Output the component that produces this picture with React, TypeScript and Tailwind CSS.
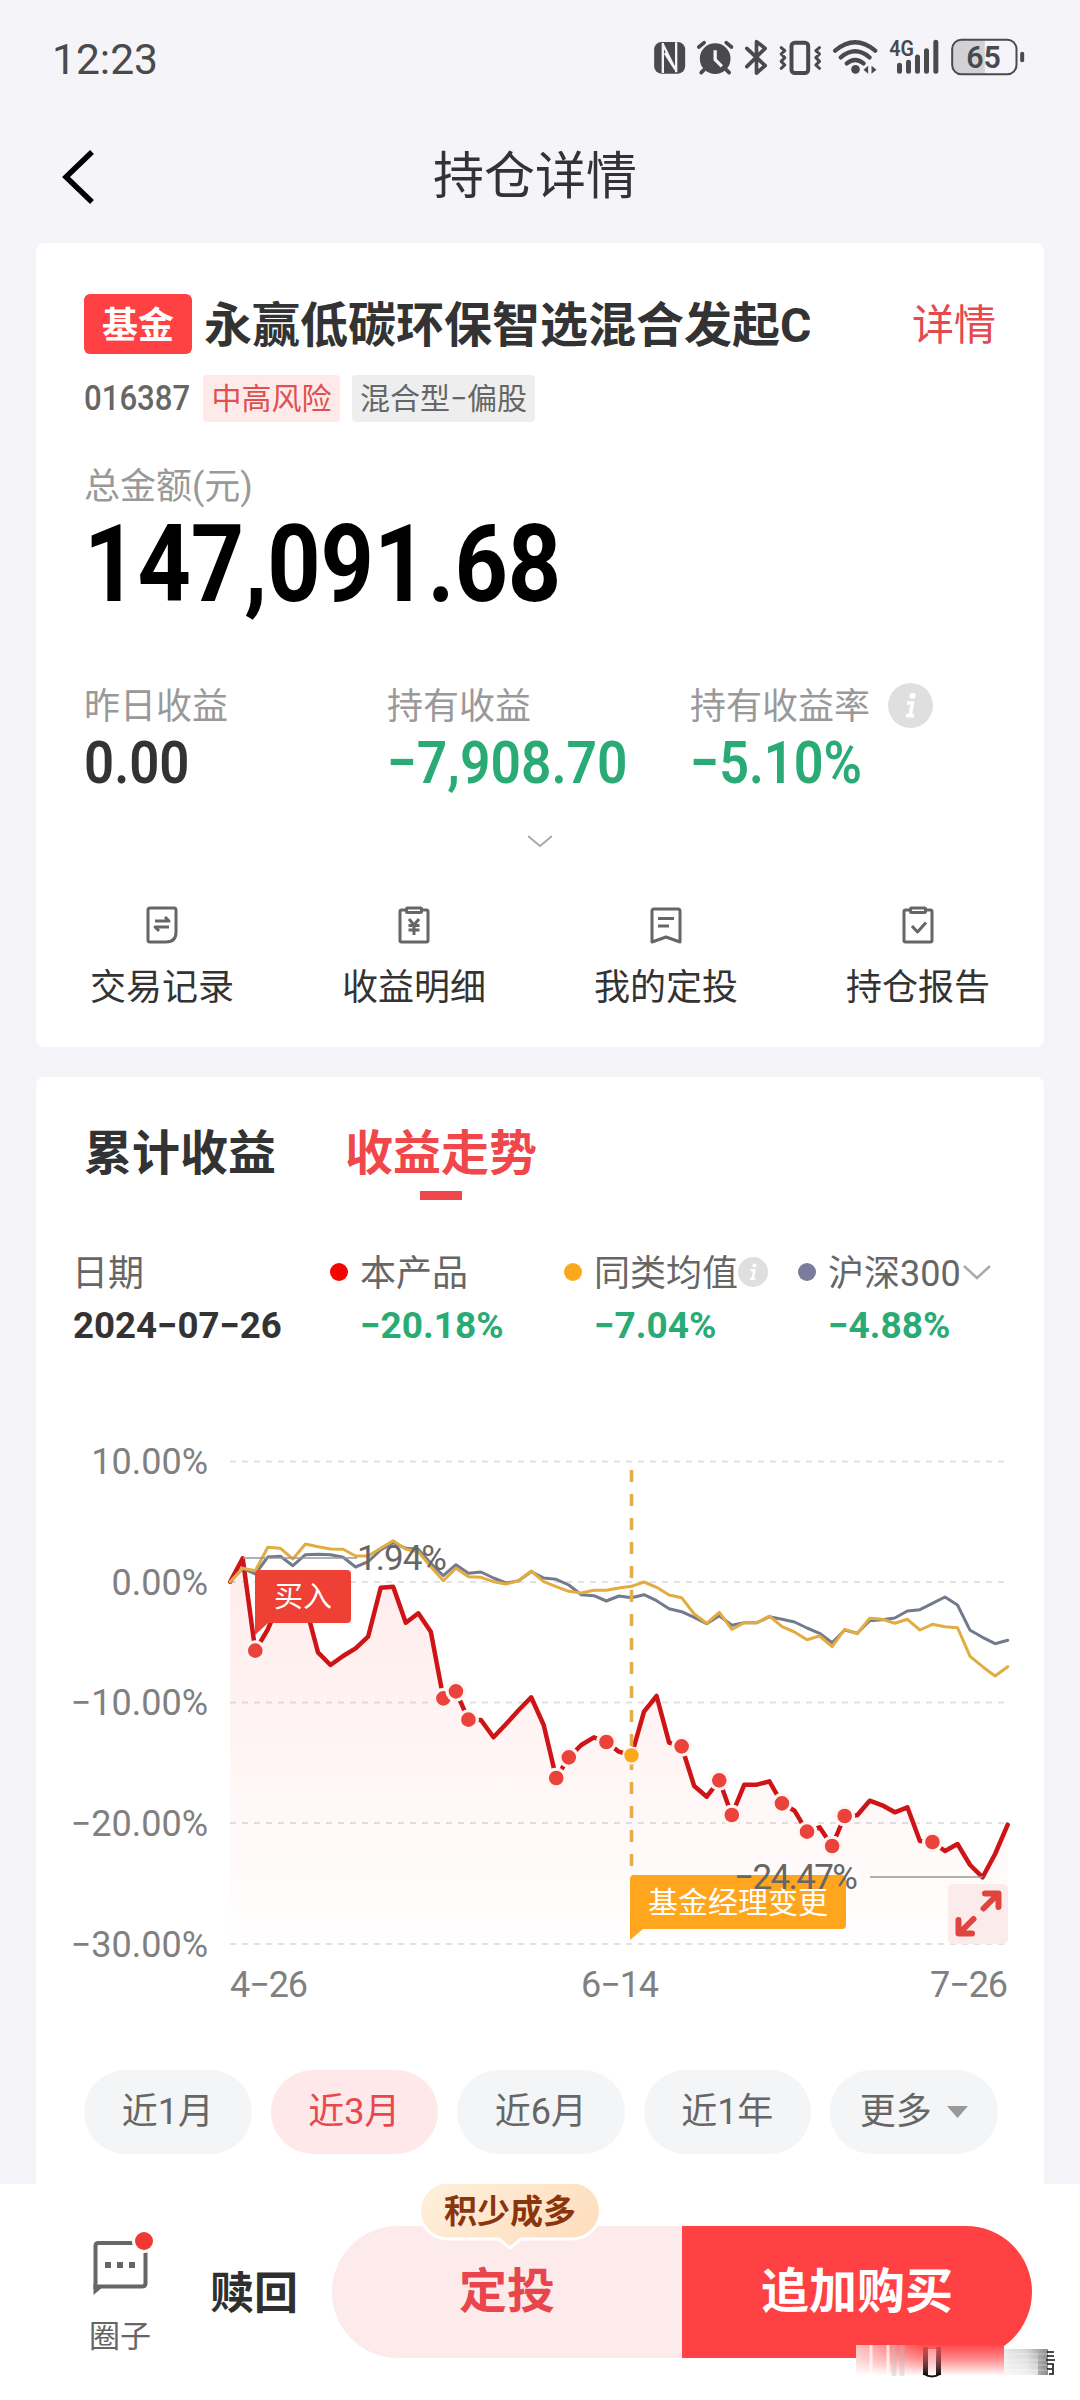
import React from "react";

const CHART_X0 = 230.2;
const CHART_STEP = 12.54;
const CHART_TOP = 1420;

// Vertical positions in thirds of a pixel below CHART_TOP, one per trading day.
const FUND = [
  485, 415, 692, 628, 540, 520, 555, 697, 735, 708, 685, 650, 503, 500, 608, 580, 635, 835, 814, 899, 900, 952, 912, 871,
  832, 915, 1074, 1012, 975, 952, 966, 995, 1006, 875, 828, 968, 979, 1098, 1130, 1081, 1185, 1094, 1094, 1084, 1150,
  1172, 1235, 1222, 1278, 1188, 1186, 1142, 1156, 1177, 1162, 1263, 1266, 1293, 1272, 1335, 1372, 1302, 1214,
];
const PEERS = [
  485, 445, 452, 382, 385, 417, 372, 380, 387, 388, 408, 408, 385, 362, 388, 395, 440, 482, 445, 470, 472, 485, 492, 482,
  453, 485, 500, 514, 519, 511, 511, 504, 499, 486, 502, 525, 533, 582, 610, 577, 628, 608, 608, 588, 620, 636, 659, 648,
  680, 628, 641, 595, 598, 610, 598, 630, 613, 620, 623, 709, 740, 768, 740,
];
const INDEX = [
  485, 445, 462, 411, 409, 437, 404, 403, 404, 412, 441, 425, 390, 368, 385, 388, 430, 467, 434, 460, 456, 474, 489, 482,
  455, 474, 478, 495, 524, 527, 543, 528, 533, 524, 542, 566, 575, 592, 611, 587, 616, 608, 608, 590, 598, 606, 624, 640,
  668, 630, 640, 602, 599, 594, 573, 569, 550, 531, 555, 631, 652, 671, 661,
];
const BUYS = [2, 17, 18, 19, 26, 27, 30, 36, 39, 40, 44, 46, 48, 49, 56];

const px = (i: number) => CHART_X0 + i * CHART_STEP;
const py = (v: number) => CHART_TOP + v / 3;
const points = (s: number[]) => s.map((v, i) => `${px(i).toFixed(1)},${py(v).toFixed(1)}`).join(" ");

const GRID = [
  { label: "10.00%", y: 1461.5 },
  { label: "0.00%", y: 1582 },
  { label: "−10.00%", y: 1702.5 },
  { label: "−20.00%", y: 1823 },
  { label: "−30.00%", y: 1944 },
];

function StatusIcons() {
  return (
    <svg className="h-10 w-[371px]" viewBox="42 50 1112 120" fill="none" stroke="#4a4a4c">
      <rect x="42" y="65" width="93" height="95" rx="22" fill="#4a4a4c" stroke="none" />
      <path d="M68 68v90M68 72l38 76M74 98l32 50M108 66v90" stroke="#f4f4f9" strokeWidth="7" />
      <circle cx="225" cy="115" r="46" fill="#4a4a4c" stroke="none" />
      <path d="M176 80l16-13M274 80l-16-13M192 148l-9 9M258 148l9 9" strokeWidth="11" strokeLinecap="round" />
      <path d="M225 90v28l20 20" stroke="#f4f4f9" strokeWidth="10" />
      <path d="M320 84l55 52-26 22V64l26 20-55 55" strokeWidth="11" strokeLinecap="round" strokeLinejoin="round" />
      <rect x="454" y="67" width="50" height="91" rx="10" strokeWidth="12" />
      <path
        d="M423 82l11 9-11 10 11 11-11 11 11 11-11 10M538 82l-11 9 11 10-11 11 11 11-11 11 11 10"
        strokeWidth="9"
        strokeLinecap="round"
        strokeLinejoin="round"
      />
      <path d="M585 91q60-50 120 0M602 111q43-36 86 0M620 129q25-20 50 0" strokeWidth="13" strokeLinecap="round" />
      <circle cx="646" cy="147" r="13" fill="#4a4a4c" stroke="none" />
      <path d="M684 136v24l-14-12zM694 136v24l15-12z" fill="#4a4a4c" stroke="none" />
      <path d="M778 135v18M805 126v27M832 110v43M859 91v62M887 66v87" strokeWidth="15" strokeLinecap="round" />
      <text x="747" y="107" fontSize="64" textLength="74" lengthAdjust="spacingAndGlyphs" fill="#4a4a4c" stroke="none" fontWeight="600">
        4G
      </text>
      <path d="M960 60h74v100h-74q-22 0-22-22V82q0-22 22-22z" fill="#d2d2d6" stroke="none" />
      <rect x="936" y="58" width="193" height="104" rx="28" strokeWidth="6" />
      <rect x="1140" y="94" width="12" height="32" rx="6" fill="#4a4a4c" stroke="none" />
      <text x="978" y="143" fontSize="94" textLength="104" lengthAdjust="spacingAndGlyphs" fill="#4a4a4c" stroke="none" fontWeight="600">
        65
      </text>
    </svg>
  );
}

function Info({ className }: { className: string }) {
  return (
    <svg className={className} viewBox="0 0 44 44">
      <circle cx="22" cy="22" r="22" fill="#dfdfdf" />
      <circle cx="24" cy="12.5" r="3" fill="#fff" />
      <path d="M18.500 19.500h5.500l-2.500 12.500M17.500 32h8" fill="none" stroke="#fff" strokeWidth="3.500" />
    </svg>
  );
}

const iconPaths: Record<string, React.ReactNode> = {
  record: (
    <>
      <path d="M4 2h24q2 0 2 2v22q0 10-10 10H4q-2 0-2-2V4q0-2 2-2z" />
      <path d="M9 15h14l-4-4M23 21H9l4 4" />
    </>
  ),
  detail: (
    <>
      <path d="M8 4H3.500Q2 4 2 5.500v29Q2 36 3.500 36h25q1.500 0 1.500-1.500v-29Q30 4 28.500 4H24" />
      <rect x="8.500" y="2" width="15" height="4.500" rx="1" />
      <path d="M11 13l5 6 5-6M10.500 19.500h11M10.500 24h11M16 19v10" />
    </>
  ),
  plan: (
    <>
      <path d="M4 3h24q2 0 2 2v31l-14-5-14 5V5q0-2 2-2z" />
      <path d="M8 12.500h16M8 20h11" />
    </>
  ),
  report: (
    <>
      <path d="M8 4H3.500Q2 4 2 5.500v29Q2 36 3.500 36h25q1.500 0 1.500-1.500v-29Q30 4 28.500 4H24" />
      <rect x="8.500" y="2" width="15" height="4.500" rx="1" />
      <path d="M10 20l5.500 6L24 16.500" />
    </>
  ),
};

const ACTIONS = [
  { icon: "record", label: "交易记录" },
  { icon: "detail", label: "收益明细" },
  { icon: "plan", label: "我的定投" },
  { icon: "report", label: "持仓报告" },
];

function SummaryCard() {
  return (
    <section className="mx-9 h-[804px] rounded-lg bg-white pt-[51px]">
      <div className="flex h-[60px] items-center pr-12 pl-12">
        <span className="flex h-[60px] w-[108px] items-center justify-center rounded-md bg-[#ff4144] pt-[3px] text-4xl leading-none font-bold text-white">
          基金
        </span>
        <h2 className="ml-3 pt-[3px] text-[48px] leading-none font-bold text-[#333]">永赢低碳环保智选混合发起C</h2>
        <span className="ml-auto pt-[3px] text-[42px] leading-none text-[#e5484d]">详情</span>
      </div>
      <div className="mt-[21px] flex h-[47px] items-center pl-12 text-3xl leading-none">
        <span className="w-[119px] origin-left scale-x-[0.89] text-[35px] leading-none font-medium text-[#666]">016387</span>
        <span className="flex h-[47px] w-[137px] items-center justify-center rounded-[4px] bg-[#fdeae9] text-[#e0504f]">中高风险</span>
        <span className="ml-3 flex h-[47px] w-[183px] items-center justify-center rounded-[4px] bg-[#eee] text-[#666]">混合型−偏股</span>
      </div>
      <p className="mt-[47px] pl-12 text-4xl leading-none text-[#999]">总金额(元)</p>
      <p className="mt-[5px] ml-12 w-[560px] origin-left scale-x-[0.862] text-[108px] leading-none font-bold text-black">147,091.68</p>
      <div className="mt-16 flex pl-12">
        <div className="w-[303px]">
          <p className="flex h-[46px] items-center pt-[3px] text-4xl leading-none text-[#999]">昨日收益</p>
          <p className="mt-[5px] origin-left scale-x-[0.88] text-[60px] leading-none font-semibold text-[#333]">0.00</p>
        </div>
        <div className="w-[303px]">
          <p className="flex h-[46px] items-center pt-[3px] text-4xl leading-none text-[#999]">持有收益</p>
          <p className="mt-[5px] origin-left scale-x-[0.89] text-[60px] leading-none font-semibold text-[#2aab75]">−7,908.70</p>
        </div>
        <div className="w-[303px]">
          <p className="flex h-[46px] items-center text-4xl leading-none text-[#999]">
            <span className="pt-[3px]">持有收益率</span>
            <Info className="ml-[18px] size-[45px]" />
          </p>
          <p className="mt-[5px] origin-left scale-x-[0.87] text-[60px] leading-none font-semibold text-[#2aab75]">−5.10%</p>
        </div>
      </div>
      <svg className="mx-auto mt-[42px] h-3 w-6" viewBox="0 0 24 12" fill="none" stroke="#aaa" strokeWidth="2">
        <path d="M0 1l12 10L24 1" />
      </svg>
      <div className="mt-[59px] grid grid-cols-4">
        {ACTIONS.map((a) => (
          <div key={a.label} className="flex flex-col items-center">
            <svg className="h-[38px] w-8" viewBox="0 0 32 38" fill="none" stroke="#666" strokeWidth="3" strokeLinejoin="round">
              {iconPaths[a.icon]}
            </svg>
            <span className="mt-[26px] text-4xl leading-none text-[#333]">{a.label}</span>
          </div>
        ))}
      </div>
    </section>
  );
}

function Legend() {
  return (
    <div className="mt-[54px] flex pl-9 text-4xl leading-none text-[#666]">
      <div className="w-[258px]">
        <p className="h-9 pt-0.5">日期</p>
        <p className="mt-[17px] ml-px origin-left scale-x-[0.99] text-[37px] leading-none font-bold whitespace-nowrap text-[#333]">
          2024−07−26
        </p>
      </div>
      <div className="w-[234px]">
        <p className="flex h-9 items-center">
          <i className="mr-3 size-[18px] rounded-full bg-[#f50500]" />
          <span className="pt-[3px]">本产品</span>
        </p>
        <p className="mt-[17px] ml-[30px] origin-left text-[37px] leading-none font-bold text-[#2aab75]">−20.18%</p>
      </div>
      <div className="w-[234px]">
        <p className="flex h-9 items-center">
          <i className="mr-3 size-[18px] rounded-full bg-[#fba81f]" />
          <span className="pt-[3px]">同类均值</span>
          <Info className="size-[30px]" />
        </p>
        <p className="mt-[17px] ml-[30px] text-[37px] leading-none font-bold text-[#2aab75]">−7.04%</p>
      </div>
      <div className="w-[234px]">
        <p className="flex h-9 items-center">
          <i className="mr-3 size-[18px] rounded-full bg-[#7b7b9d]" />
          <span className="pt-[3px]">沪深300</span>
          <svg className="ml-0.5 h-[15px] w-7" viewBox="0 0 28 15" fill="none" stroke="#aaa" strokeWidth="2.500">
            <path d="M1 1l13 12L27 1" />
          </svg>
        </p>
        <p className="mt-[17px] ml-[30px] text-[37px] leading-none font-bold text-[#2aab75]">−4.88%</p>
      </div>
    </div>
  );
}

function TrendChart() {
  return (
    <svg className="block h-[666px] w-[1008px]" viewBox="36 1344 1008 666" fill="none">
      <defs>
        <linearGradient id="fundFill" x1="0" y1="1560" x2="0" y2="1944" gradientUnits="userSpaceOnUse">
          <stop offset="0" stopColor="#ff3c3c" stopOpacity="0.1" />
          <stop offset="1" stopColor="#ff3c3c" stopOpacity="0.005" />
        </linearGradient>
      </defs>
      {GRID.map((g) => (
        <g key={g.label}>
          <path d={`M230 ${g.y}H1008`} stroke="#e2e2e2" strokeWidth="2" strokeDasharray="6 6" />
          <text x="208" y={g.y + 12.5} textAnchor="end" fontSize="36" fill="#808080">
            {g.label}
          </text>
        </g>
      ))}
      <polygon points={`${px(0)},1944 ${points(FUND)} ${px(62)},1944`} fill="url(#fundFill)" />
      <polyline points={points(FUND)} stroke="#cf1417" strokeWidth="4.500" strokeLinejoin="round" strokeLinecap="round" />
      <polyline points={points(INDEX)} stroke="#737a8c" strokeWidth="3" strokeLinejoin="round" strokeLinecap="round" />
      <polyline points={points(PEERS)} stroke="#e2ac40" strokeWidth="3" strokeLinejoin="round" strokeLinecap="round" />
      <path d="M631.500 1470V1867" stroke="#e3af48" strokeWidth="3.600" strokeDasharray="12 12" />
      {BUYS.map((i) => (
        <circle key={i} cx={px(i)} cy={py(FUND[i])} r="8.900" fill="#e9433b" stroke="#fff5f4" strokeWidth="3.200" />
      ))}
      <circle cx={px(32)} cy={py(FUND[32])} r="8.200" fill="#fba81f" stroke="#fff5ee" strokeWidth="2" />
      <path d="M243 1558H357" stroke="#999" strokeWidth="1.300" />
      <path d="M870 1877H983" stroke="#999" strokeWidth="1.600" />
      <path d="M259 1570H347q4 0 4 4V1619q0 4-4 4H268L255 1635V1574q0-4 4-4z" fill="#ee4035" />
      <text x="274" y="1607" fontSize="29" fill="#fff">
        买入
      </text>
      <path d="M634 1875H842q4 0 4 4V1925q0 4-4 4H643L630 1940V1879q0-4 4-4z" fill="#ffa51e" />
      <text x="648" y="1912.500" fontSize="30" fill="#fff">
        基金经理变更
      </text>
      <text x="357" y="1570" fontSize="35" textLength="90" fill="#666">
        1.94%
      </text>
      <text x="734" y="1889" fontSize="35" textLength="124" fill="#666">
        −24.47%
      </text>
      <rect x="948" y="1884" width="60" height="60" rx="5" fill="#fcebeb" />
      <path
        d="M983.500 1908.500L997 1895M985 1893.500H998.500V1907M973.500 1919L960 1932.500M958.500 1920V1933.500H972"
        stroke="#e0443f"
        strokeWidth="6"
        strokeLinecap="round"
        strokeLinejoin="round"
      />
      <g fontSize="36" fill="#808080">
        <text x="230" y="1997" textLength="78">
          4−26
        </text>
        <text x="581" y="1997" textLength="78">
          6−14
        </text>
        <text x="930" y="1997" textLength="78">
          7−26
        </text>
      </g>
    </svg>
  );
}

function TrendCard() {
  return (
    <section className="mx-9 mt-[30px] h-[1107px] rounded-t-lg bg-white pt-[53px]">
      <div className="flex pl-12 text-[48px] leading-none font-bold">
        <span className="text-[#333]">累计收益</span>
        <span className="ml-[69px] flex flex-col items-center text-[#f0474b]">
          收益走势
          <i className="mt-[13px] h-[9px] w-[42px] bg-[#f0474b]" />
        </span>
      </div>
      <Legend />
      <TrendChart />
      <div className="mt-[60px] flex gap-[19px] pl-12 text-4xl leading-none text-[#666]">
        {["近1月", "近3月", "近6月", "近1年"].map((t) => (
          <span
            key={t}
            className={
              t === "近3月"
                ? "flex h-[84px] w-[167.5px] items-center justify-center rounded-full bg-[#fee8e9] text-[#e5484d]"
                : "flex h-[84px] w-[167.5px] items-center justify-center rounded-full bg-[#f3f5f6]"
            }
          >
            {t}
          </span>
        ))}
        <span className="flex h-[84px] w-[167.5px] items-center justify-center rounded-full bg-[#f3f5f6]">
          更多
          <svg className="ml-[15px] h-3 w-[21px]" viewBox="0 0 21 12">
            <path d="M0 0h21L10.500 12z" fill="#999" />
          </svg>
        </span>
      </div>
    </section>
  );
}

function Watermark() {
  return (
    <svg className="absolute top-[161px] left-[856px] h-9 w-[202px]" viewBox="0 0 202 36">
      <defs>
        <linearGradient id="fadeRed" x1="0" y1="0" x2="0" y2="1">
          <stop offset="0" stopColor="#ff4a4c" />
          <stop offset="0.450" stopColor="#ff8a8b" />
          <stop offset="1" stopColor="#fff" />
        </linearGradient>
        <linearGradient id="fadeDark" x1="0" y1="0" x2="1" y2="0">
          <stop offset="0" stopColor="#e8e8e8" />
          <stop offset="0.500" stopColor="#d5d5d5" />
          <stop offset="1" stopColor="#8a8a8a" />
        </linearGradient>
        <linearGradient id="fadeDown" x1="0" y1="0" x2="0" y2="1">
          <stop offset="0" stopColor="#fff" stopOpacity="0" />
          <stop offset="1" stopColor="#fff" stopOpacity="0.700" />
        </linearGradient>
        <linearGradient id="stem" x1="0" y1="0" x2="0" y2="1">
          <stop offset="0" stopColor="#a83538" stopOpacity="0.500" />
          <stop offset="1" stopColor="#111" />
        </linearGradient>
        <linearGradient id="leftEdge" x1="0" y1="0" x2="1" y2="0">
          <stop offset="0" stopColor="#fff" stopOpacity="0.650" />
          <stop offset="1" stopColor="#fff" stopOpacity="0" />
        </linearGradient>
      </defs>
      <rect width="148" height="31" fill="url(#fadeRed)" />
      <rect width="66" height="31" fill="url(#leftEdge)" />
      <path d="M15 0v31M32 0v31" stroke="#fff" strokeWidth="3" opacity="0.700" />
      <path d="M38 0v31M46 0v31" stroke="#bbb" strokeWidth="5" opacity="0.350" />
      <rect x="72" y="4" width="9" height="26" fill="#fff" opacity="0.400" />
      <rect x="67" y="2" width="5" height="28" fill="url(#stem)" />
      <rect x="80" y="2" width="5" height="28" fill="url(#stem)" />
      <path d="M68 29q8 5 16 0" stroke="#111" strokeWidth="2" fill="none" />
      <path d="M148 4h44v26h-44z" fill="url(#fadeDark)" />
      <path d="M148 4h34v26h-34z" fill="url(#fadeDown)" />
      <path d="M148 9h44M148 15h44M148 20h44M148 25h44" stroke="#fff" opacity="0.400" />
      <path d="M191 7h7M191 11h7M190 15h9M191 19h6v10h-4M191 24h5" stroke="#111" strokeWidth="1.600" fill="none" />
    </svg>
  );
}

function BottomBar() {
  return (
    <footer className="relative flex h-[216px] items-start bg-white">
      <div className="ml-[84px] flex w-[72px] flex-col items-center pt-12">
        <svg className="h-[64px] w-[72px]" viewBox="84 2232 72 64" fill="none">
          <path d="M95.500 2289V2246q0-3 3-3H142q3.500 0 3.500 3.500V2283q0 3.500-3.500 3.500H98" stroke="#666" strokeWidth="4" />
          <path d="M93.500 2284V2295L104 2286z" fill="#666" />
          <path d="M105 2262h6v6h-6zM117 2262h6v6h-6zM129 2262h6v6h-6z" fill="#666" />
          <circle cx="144" cy="2241" r="10.500" fill="#ef3a34" stroke="#fff" strokeWidth="3" />
        </svg>
        <span className="mt-[25px] text-[31px] leading-none text-[#666]">圈子</span>
      </div>
      <span className="mt-[88px] ml-[54px] text-[44px] leading-none font-bold text-[#2f2f2f]">赎回</span>
      <div className="mt-[42px] mr-12 ml-auto flex h-[132px] w-[700px] overflow-hidden rounded-full text-[48px] leading-none font-bold">
        <span className="flex w-[350px] items-center justify-center bg-[#fdeaeb] text-[#e8454c]">定投</span>
        <span className="flex w-[350px] items-center justify-center bg-[#ff4144] text-white">追加购买</span>
      </div>
      <div className="absolute top-0 left-[417px] h-[68px] w-[186px] overflow-hidden">
        <svg className="absolute inset-0" width="186" height="68" viewBox="0 0 186 68">
          <defs>
            <linearGradient id="tip" x1="0" y1="0" x2="1" y2="0.400">
              <stop offset="0" stopColor="#fff0dc" />
              <stop offset="1" stopColor="#fedfc0" />
            </linearGradient>
          </defs>
          <path
            d="M31 -2H155a28 28 0 0 1 0 57H104L93 64L82 55H31a28 28 0 0 1 0-57z"
            fill="url(#tip)"
            stroke="#fff"
            strokeWidth="3"
          />
        </svg>
        <span className="relative flex h-[54px] items-center justify-center text-[33px] leading-none font-bold text-[#8a350d]">积少成多</span>
      </div>
      <Watermark />
    </footer>
  );
}

export default function App() {
  return (
    <main className="h-[2400px] w-[1080px] overflow-hidden bg-[#f4f4f9] font-['Roboto','Noto_Sans_CJK_SC',sans-serif]">
      <div className="flex h-[116px] items-start justify-between pt-[37px] pr-[55px] pl-[52px]">
        <span className="mt-px origin-left scale-x-[0.99] text-[43px] leading-none text-[#4a4a4c]">12:23</span>
        <StatusIcons />
      </div>
      <header className="flex h-[127px] items-start pt-[33px] pl-[62px]">
        <svg className="mt-px h-[54px] w-8" viewBox="0 0 32 54" fill="none" stroke="#000" strokeWidth="5.500">
          <path d="M30 2L4 27L30 52" />
        </svg>
        <h1 className="mt-0.5 ml-[339px] text-[51px] leading-none text-[#333]">持仓详情</h1>
      </header>
      <SummaryCard />
      <TrendCard />
      <BottomBar />
    </main>
  );
}
